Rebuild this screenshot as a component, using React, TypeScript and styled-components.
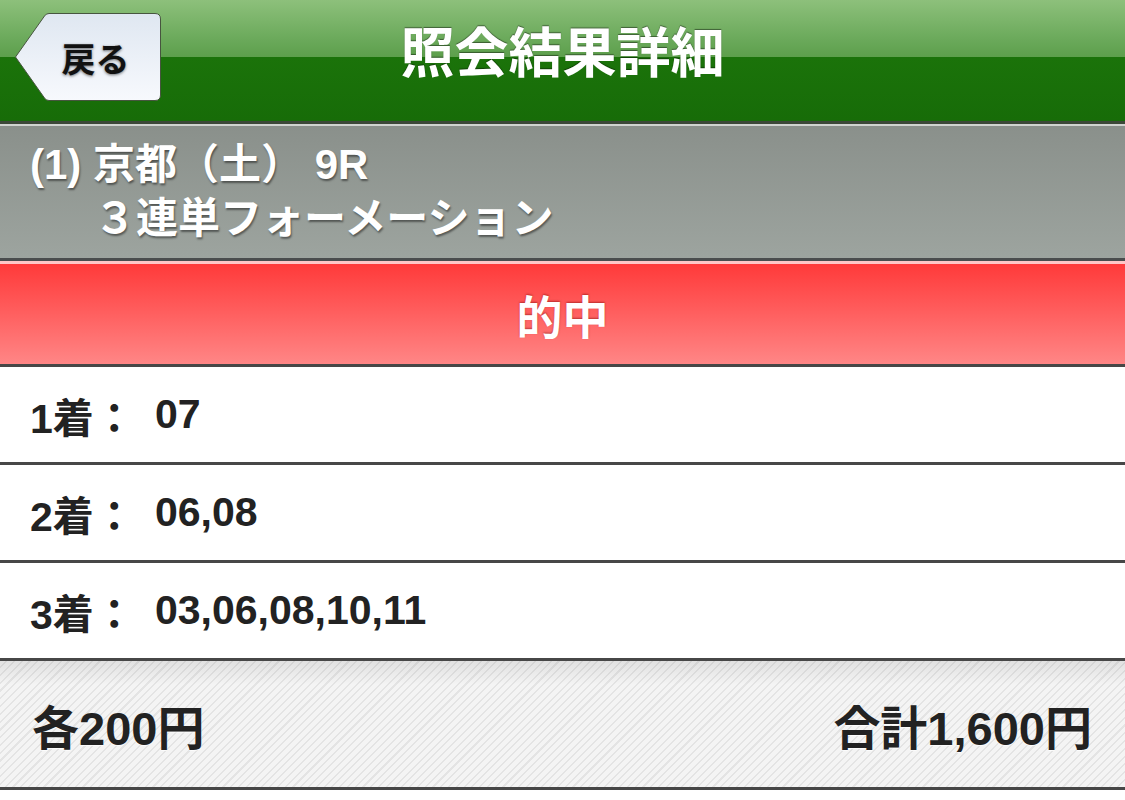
import React from "react";
import styled, { createGlobalStyle } from "styled-components";

const Global = createGlobalStyle`
  html, body { margin: 0; padding: 0; background: #fff; }
  body {
    font-family: "Liberation Sans", "Noto Sans CJK JP", sans-serif;
    font-weight: bold;
  }
`;

const Page = styled.div`
  width: 1125px;
  display: flex;
  flex-direction: column;
`;

const NavBar = styled.header`
  height: 124px;
  box-sizing: border-box;
  display: grid;
  grid-template-columns: 1fr auto 1fr;
  align-items: start;
  background: linear-gradient(
    to bottom,
    #8dc07b 0px,
    #6aa95a 40px,
    #5d9f4c 57px,
    #1b730a 57px,
    #176c08 121px
  );
  border-bottom: 3px solid #3c4838;
`;

const BackButton = styled.button`
  position: relative;
  justify-self: start;
  margin: 13px 0 0 14px;
  width: 147px;
  height: 88px;
  padding: 0 0 0 16px;
  border: none;
  background: transparent;
  display: flex;
  align-items: center;
  justify-content: center;
  font-family: inherit;
  font-weight: bold;
  font-size: 34px;
  color: #111;
  cursor: pointer;
  text-shadow: 0 1px 3px rgba(0, 0, 0, 0.55);
`;

const ButtonShape = styled.svg`
  position: absolute;
  inset: 0;
  width: 147px;
  height: 88px;
`;

const ButtonLabel = styled.span`
  position: relative;
`;

const Title = styled.h1`
  margin: 14px 0 0;
  font-size: 54px;
  line-height: 80px;
  font-weight: bold;
  color: #fff;
  text-shadow: 0 -1px 1px rgba(0, 0, 0, 0.45);
`;

const RaceInfo = styled.section`
  height: 137px;
  box-sizing: border-box;
  border-top: 2px solid #d0d4d0;
  border-bottom: 3px solid #4a4d4e;
  background: linear-gradient(to bottom, #8a908b, #9da49f);
  padding: 12px 0 0 30px;
  display: flex;
  flex-direction: column;
  color: #fff;
  text-shadow: 1px 2px 2px rgba(0, 0, 0, 0.45);
`;

const InfoLine = styled.div<{ $indent?: number }>`
  font-size: 42px;
  line-height: 54px;
  padding-left: ${(p) => p.$indent ?? 0}px;
  white-space: pre;
`;

const ResultBand = styled.div`
  height: 106px;
  box-sizing: border-box;
  border-top: 3px solid #ffc6c6;
  border-bottom: 3px solid #474747;
  background: linear-gradient(to bottom, #ff3a3a, #ff5858 40%, #ff8686);
  display: flex;
  align-items: center;
  justify-content: center;
  color: #fff;
  font-size: 46px;
  text-shadow: 0 -1px 2px rgba(120, 0, 0, 0.5);
`;

const PickRow = styled.div`
  height: 98px;
  box-sizing: border-box;
  border-bottom: 3px solid #474747;
  background: #fff;
  display: flex;
  align-items: center;
  padding-left: 30px;
  color: #222;
  font-size: 41px;
`;

const PickLabel = styled.span`
  width: 125px;
  white-space: pre;
`;

const PickValue = styled.span``;

const Summary = styled.footer`
  height: 129px;
  box-sizing: border-box;
  border-bottom: 3px solid #474747;
  background:
    linear-gradient(to bottom, rgba(0, 0, 0, 0.08), rgba(0, 0, 0, 0) 24px),
    repeating-linear-gradient(
      135deg,
      #f4f4f4 0px,
      #f4f4f4 4px,
      #e4e4e4 4px,
      #e4e4e4 5.5px
    );
  display: flex;
  align-items: center;
  justify-content: space-between;
  padding: 0 33px 0 32px;
  color: #222;
  font-size: 47px;
  text-shadow: 0 1px 0 rgba(255, 255, 255, 0.8);
`;

const picks = [
  { place: "1着：", horses: "07" },
  { place: "2着：", horses: "06,08" },
  { place: "3着：", horses: "03,06,08,10,11" },
];

export default function App() {
  return (
    <Page>
      <Global />
      <NavBar>
        <BackButton type="button">
          <ButtonShape viewBox="0 0 147 88">
            <defs>
              <linearGradient id="backFill" x1="0" y1="0" x2="0" y2="1">
                <stop offset="0" stopColor="#dfe7f1" />
                <stop offset="1" stopColor="#f7f9fd" />
              </linearGradient>
            </defs>
            <path
              d="M1.5 44 L30.5 3 Q32 0.5 35 0.5 H141 Q146.5 0.5 146.5 6 V82 Q146.5 87.5 141 87.5 H35 Q32 87.5 30.5 85 Z"
              fill="url(#backFill)"
              stroke="#47553f"
              strokeWidth="1"
            />
          </ButtonShape>
          <ButtonLabel>戻る</ButtonLabel>
        </BackButton>
        <Title>照会結果詳細</Title>
        <span />
      </NavBar>

      <RaceInfo>
        <InfoLine>(1) 京都（土） 9R</InfoLine>
        <InfoLine $indent={64}>３連単フォーメーション</InfoLine>
      </RaceInfo>

      <ResultBand>的中</ResultBand>

      {picks.map((p) => (
        <PickRow key={p.place}>
          <PickLabel>{p.place}</PickLabel>
          <PickValue>{p.horses}</PickValue>
        </PickRow>
      ))}

      <Summary>
        <span>各200円</span>
        <span>合計1,600円</span>
      </Summary>
    </Page>
  );
}
